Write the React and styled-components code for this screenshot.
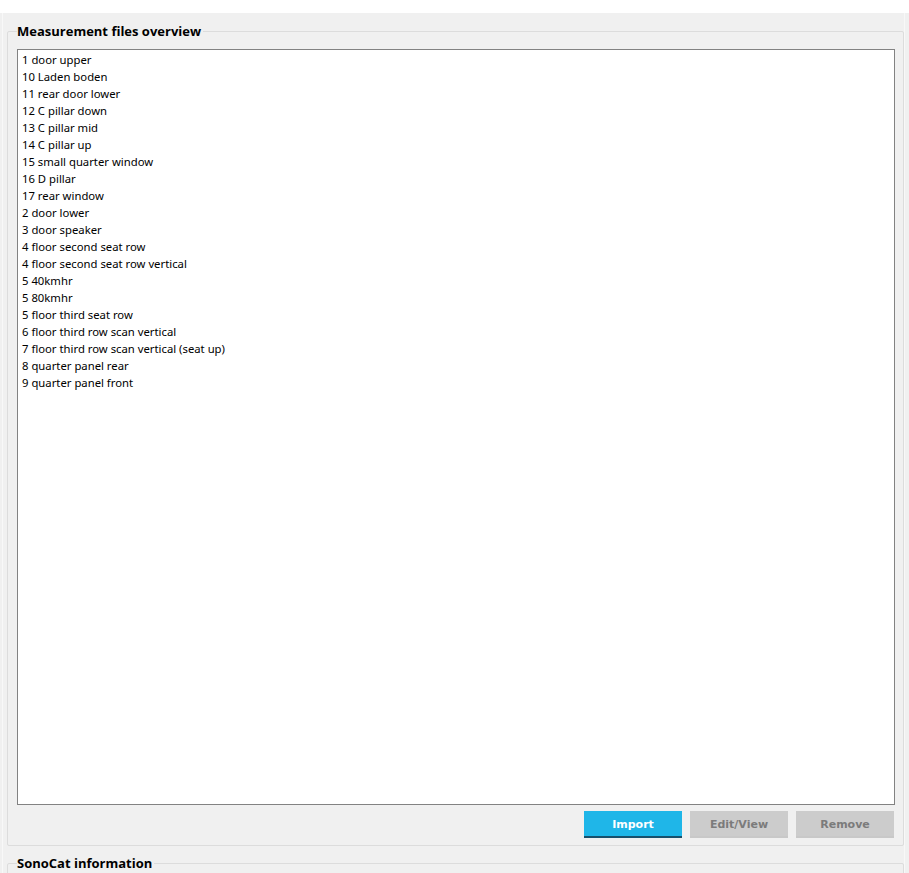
import React from 'react';
import styled, { createGlobalStyle } from 'styled-components';

const GlobalStyle = createGlobalStyle`
  html, body {
    margin: 0;
    padding: 0;
    background: #ffffff;
  }
  body {
    font-family: "Noto Sans", "Open Sans", sans-serif;
  }
`;

const Window = styled.div`
  margin-top: 13px;
  height: 860px;
  background: #f0f0f0;
  padding: 0 4px 0 2px;
  overflow: hidden;
  box-sizing: border-box;
`;

const Panel = styled.div`
  height: 100%;
  border-left: 1px solid #f8f8f8;
  border-right: 1px solid #f8f8f8;
  padding: 9px 0 0 4px;
  box-sizing: border-box;
  display: flex;
  flex-direction: column;
  gap: 8px;
`;

const Group = styled.fieldset`
  margin: 0;
  padding: 9px 8px 7px 9px;
  border: 1px solid #dcdcdc;
  border-radius: 2px;
  min-width: 0;
  display: flex;
  flex-direction: column;
  gap: 6px;
  flex: ${p => (p.$grow ? '1 0 auto' : '0 0 auto')};
`;

const Legend = styled.legend`
  padding: 0 2px 0 0;
  margin-left: 0;
  font-family: "Open Sans", "Noto Sans", sans-serif;
  font-weight: 700;
  font-size: 13px;
  line-height: 18px;
  color: #000;
`;

const FileList = styled.ul`
  list-style: none;
  margin: 0;
  padding: 1px 0 0 4px;
  height: 756px;
  box-sizing: border-box;
  background: #ffffff;
  border: 1px solid #828282;
  overflow: hidden;
`;

const FileItem = styled.li`
  font-size: 11.3px;
  line-height: 17px;
  height: 17px;
  color: #000;
  white-space: nowrap;
`;

const ButtonRow = styled.div`
  display: flex;
  justify-content: flex-end;
  gap: 8px;
  padding-right: 1px;
`;

const Button = styled.button`
  width: 98px;
  height: 27px;
  box-sizing: border-box;
  border: none;
  border-bottom: ${p => (p.$primary ? '2px solid #17506c' : '2px solid #c8c8c8')};
  background: ${p => (p.$primary ? '#1fb6e8' : '#cccccc')};
  color: ${p => (p.$primary ? '#ffffff' : '#7b7b7b')};
  font-family: "DejaVu Sans", Verdana, sans-serif;
  font-weight: 700;
  font-size: 11px;
  padding: 2px 0 0;
  cursor: pointer;
`;

const files = [
  '1 door upper',
  '10 Laden boden',
  '11 rear door lower',
  '12 C pillar down',
  '13 C pillar mid',
  '14 C pillar up',
  '15 small quarter window',
  '16 D pillar',
  '17 rear window',
  '2 door lower',
  '3 door speaker',
  '4 floor second seat row',
  '4 floor second seat row vertical',
  '5 40kmhr',
  '5 80kmhr',
  '5 floor third seat row',
  '6 floor third row scan vertical',
  '7 floor third row scan vertical (seat up)',
  '8 quarter panel rear',
  '9 quarter panel front',
];

const App = () => (
  <>
    <GlobalStyle />
    <Window>
      <Panel>
        <Group>
          <Legend>Measurement files overview</Legend>
          <FileList>
            {files.map(name => (
              <FileItem key={name}>{name}</FileItem>
            ))}
          </FileList>
          <ButtonRow>
            <Button $primary>Import</Button>
            <Button>Edit/View</Button>
            <Button>Remove</Button>
          </ButtonRow>
        </Group>
        <Group $grow>
          <Legend>SonoCat information</Legend>
        </Group>
      </Panel>
    </Window>
  </>
);

export default App;
